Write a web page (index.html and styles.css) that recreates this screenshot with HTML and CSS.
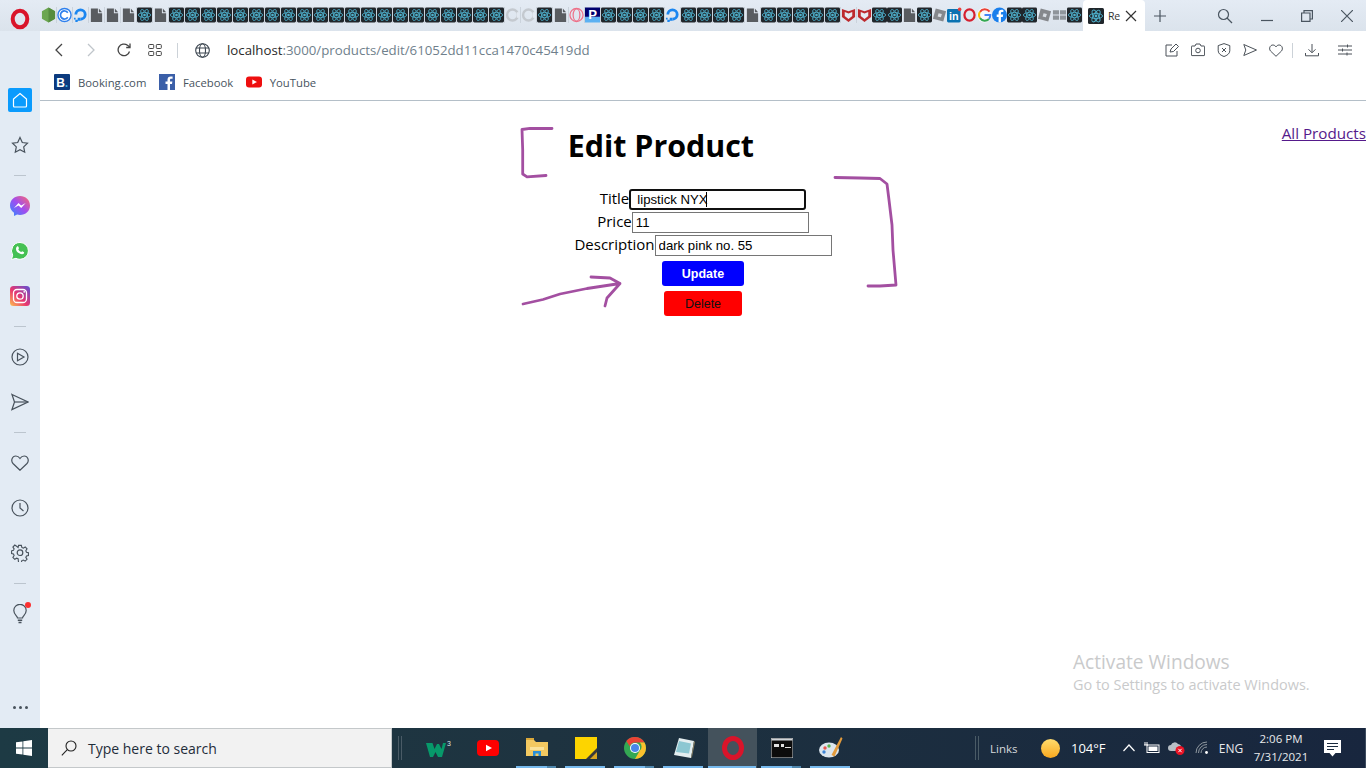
FILE: index.html
```html
<!DOCTYPE html>
<html lang="en">
<head>
    <meta charset="UTF-8">
    <title>React App</title>
    <link rel="stylesheet" href="styles.css">
</head>
<body>
    <!-- favicon sprites -->
    <svg class="sprites" xmlns="http://www.w3.org/2000/svg">
        <symbol id="react" viewBox="0 0 16 16">
            <rect width="16" height="16" rx="1.5" fill="#20262b"/>
            <g fill="none" stroke="#4fb3cf" stroke-width=".9">
                <ellipse cx="8" cy="8" rx="6.6" ry="2.6"/>
                <ellipse cx="8" cy="8" rx="6.6" ry="2.6" transform="rotate(60 8 8)"/>
                <ellipse cx="8" cy="8" rx="6.6" ry="2.6" transform="rotate(120 8 8)"/>
            </g>
            <circle cx="8" cy="8" r="1.4" fill="#4fb3cf"/>
        </symbol>
        <symbol id="doc" viewBox="0 0 16 16">
            <path d="M2 1h7.5v5H14v9.500H2z" fill="#595c60"/>
            <path d="M10.500 1L14 5h-3.500z" fill="#595c60"/>
        </symbol>
        <symbol id="node" viewBox="0 0 16 16">
            <path d="M8 0l7 4v8l-7 4-7-4V4z" fill="#6ba650"/>
            <path d="M8 0l7 4v8l-7 4z" fill="#558c3e"/>
        </symbol>
        <symbol id="cee" viewBox="0 0 16 16">
            <circle cx="8" cy="8" r="7" fill="#fff" stroke="#2f80ed" stroke-width="1.500"/>
            <path d="M11.500 5.500a4.300 4.300 0 1 0 0 5" fill="none" stroke="#2f80ed" stroke-width="1.800"/>
        </symbol>
        <symbol id="ocean" viewBox="0 0 16 16">
            <path d="M8 14a6.500 6.500 0 1 0-6.500-6.500h3A3.500 3.500 0 1 1 8 11z" fill="#1b86f0"/>
            <path d="M5 11h3v3H5zM2.500 13H5v2.500H2.500zM1 11h1.800v1.800H1z" fill="#1b86f0"/>
        </symbol>
        <symbol id="ghost" viewBox="0 0 16 16">
            <circle cx="8" cy="8" r="5.800" fill="none" stroke="#c4c9cf" stroke-width="2.600"/>
            <path d="M14 5v6" stroke="#e3e9f1" stroke-width="3"/>
        </symbol>
        <symbol id="ring" viewBox="0 0 16 16">
            <circle cx="8" cy="8" r="7" fill="none" stroke="#ee7088" stroke-width="1.300"/>
            <ellipse cx="8" cy="8" rx="3.600" ry="6.500" fill="none" stroke="#ee7088" stroke-width="1.300"/>
        </symbol>
        <symbol id="pee" viewBox="0 0 16 16">
            <rect width="16" height="10" fill="#00006e"/>
            <rect y="10" width="16" height="6" fill="#5cb1f2"/>
            <text x="8" y="12.500" class="sprite-text" font-size="14" fill="#fff">P</text>
        </symbol>
        <symbol id="shield" viewBox="0 0 16 16">
            <path d="M1 1.500l7 2.500 7-2.500V10l-7 5.500L1 10z" fill="#bd2a2e"/>
            <path d="M4 4.800l4 1.500 4-1.500V9L8 12.200 4 9z" fill="#e6ebf2"/>
        </symbol>
        <symbol id="roblox" viewBox="0 0 16 16">
            <path d="M4 1l11 3-3 11L1 12z" fill="#85888c"/>
            <path d="M7 6l3.500 1-1 3.500L6 9.500z" fill="#d8dde3"/>
        </symbol>
        <symbol id="linked" viewBox="0 0 16 16">
            <rect width="14.500" y="1.500" height="14.500" rx="1.500" fill="#0a72b1"/>
            <text x="7.200" y="13" class="sprite-text" font-size="11.500" fill="#fff">in</text>
            <circle cx="13.500" cy="2" r="1.900" fill="#e8413c"/>
        </symbol>
        <symbol id="opera" viewBox="0 0 16 16">
            <ellipse cx="8" cy="8" rx="5.400" ry="6" fill="none" stroke="#d5202f" stroke-width="2.400"/>
        </symbol>
        <symbol id="google" viewBox="0 0 16 16">
            <circle cx="8" cy="8" r="8" fill="#f6f8fb"/>
            <path d="M13.400 4.500A6.300 6.300 0 0 0 3.200 4.600" fill="none" stroke="#ea4335" stroke-width="2.200"/>
            <path d="M3.200 4.600a6.300 6.300 0 0 0 0 6.800" fill="none" stroke="#fbbc05" stroke-width="2.200"/>
            <path d="M3.200 11.400a6.300 6.300 0 0 0 9.600.800" fill="none" stroke="#34a853" stroke-width="2.200"/>
            <path d="M8 8h6.200a6.300 6.300 0 0 1-1.400 4.200" fill="none" stroke="#4285f4" stroke-width="2.200"/>
        </symbol>
        <symbol id="fbook" viewBox="0 0 16 16">
            <circle cx="8" cy="8" r="8" fill="#1a7fec"/>
            <path d="M9.500 16v-6h2l.4-2.500H9.500V6c0-.8.3-1.300 1.400-1.300h1.200V2.600c-.4-.1-1.100-.1-1.900-.1-2 0-3.200 1.200-3.200 3.300v1.700h-2V10h2v6z" fill="#fff"/>
        </symbol>
        <symbol id="apps" viewBox="0 0 16 16">
            <path d="M1 3h6.500v4.500H1zM8.500 3H15v4.500H8.500zM1 8.500h6.500V13H1zM8.500 8.500H15V13H8.500z" fill="#8f959b"/>
        </symbol>
    </svg>

    <div class="window">
        <div class="tabstrip">
            <div class="logo-slot">
                <svg width="20" height="22" viewBox="0 0 20 22"><ellipse cx="10" cy="11" rx="7.300" ry="8.300" fill="none" stroke="#d9142a" stroke-width="4"/></svg>
            </div>
            <div class="favicons" id="favicons"></div>
            <div class="active-tab">
                <svg class="fav" width="16" height="16"><use href="#react"/></svg>
                <span class="tab-title">Re</span>
                <svg class="tab-close" width="12" height="12" viewBox="0 0 12 12"><path d="M1 1l10 10M11 1L1 11" stroke="#333" stroke-width="1.200"/></svg>
            </div>
            <svg class="new-tab" width="12" height="12" viewBox="0 0 12 12"><path d="M6 0v12M0 6h12" stroke="#4a5560" stroke-width="1.200"/></svg>
            <div class="window-controls">
                <svg width="16" height="16" viewBox="0 0 16 16" fill="none" stroke="#4a5560" stroke-width="1.200"><circle cx="6.500" cy="6.500" r="5"/><path d="M10 10l5 5"/></svg>
                <svg width="12" height="12" viewBox="0 0 12 12" fill="none" stroke="#4a5560" stroke-width="1.200"><path d="M0 10.500h12"/></svg>
                <svg width="12" height="12" viewBox="0 0 12 12" fill="none" stroke="#4a5560" stroke-width="1.200"><path d="M.6 3h8.400v8.400H.6zM3 3V.6h8.400V9H9"/></svg>
                <svg width="12" height="12" viewBox="0 0 12 12" fill="none" stroke="#4a5560" stroke-width="1.200"><path d="M0 0l12 12M12 0L0 12"/></svg>
            </div>
        </div>

        <div class="browser-body">
            <aside class="sidebar">
                <div class="side-item">
                    <div class="home-tile">
                        <svg width="16" height="16" viewBox="0 0 16 16" fill="none" stroke="#fff" stroke-width="1.200"><path d="M8 1.500l6.500 5.500v7a1 1 0 0 1-1 1h-11a1 1 0 0 1-1-1V7z"/></svg>
                    </div>
                </div>
                <div class="side-item">
                    <svg width="18" height="18" viewBox="0 0 18 18" class="line-icon"><path d="M9 1.500l2.300 5 5.200.7-3.800 3.700 1 5.300L9 13.700 4.300 16.200l1-5.300L1.500 7.200l5.200-.7z"/></svg>
                </div>
                <div class="side-rule"></div>
                <div class="side-item">
                    <svg width="20" height="20" viewBox="0 0 20 20">
                        <defs><linearGradient id="msg" x1="0" y1="1" x2="1" y2="0"><stop offset="0" stop-color="#2f8cff"/><stop offset=".5" stop-color="#a04df0"/><stop offset="1" stop-color="#ff6a6a"/></linearGradient></defs>
                        <path d="M10 0c5.600 0 10 4.100 10 9.500S15.600 19 10 19c-1 0-2-.1-2.900-.4L4 20v-3.300C1.500 15 0 12.500 0 9.500 0 4.100 4.400 0 10 0z" fill="url(#msg)"/>
                        <path d="M4 12l4.500-5 2.700 2.500L15.700 7l-4.500 5-2.700-2.500z" fill="#fff"/>
                    </svg>
                </div>
                <div class="side-item">
                    <svg width="18" height="18" viewBox="0 0 18 18">
                        <path d="M9 .5a8.400 8.400 0 0 1 0 16.800c-1.500 0-2.900-.4-4-1L.5 17.500l1.200-4.300A8.400 8.400 0 0 1 9 .5z" fill="#45c153" stroke="#fff"/>
                        <path d="M6 4.500c.7-.5 1.200-.3 1.500.5l.5 1.300-.7 1c.6 1.300 1.500 2.200 2.900 2.800l1-.8 1.500.7c.6.400.6.900.2 1.500-1 1.200-2.800 1-4.700-.2C6.200 10.700 4.900 8.800 5 6.800c0-1 .4-1.800 1-2.300z" fill="#fff"/>
                    </svg>
                </div>
                <div class="side-item">
                    <svg width="20" height="20" viewBox="0 0 20 20">
                        <defs><linearGradient id="ig" x1="0" y1="1" x2="1" y2="0"><stop offset="0" stop-color="#fdc04f"/><stop offset=".45" stop-color="#e8366f"/><stop offset="1" stop-color="#5b51d8"/></linearGradient></defs>
                        <rect width="20" height="20" rx="3.500" fill="url(#ig)"/>
                        <rect x="3.500" y="3.500" width="13" height="13" rx="3.500" fill="none" stroke="#fff" stroke-width="1.300"/>
                        <circle cx="10" cy="10" r="3.200" fill="none" stroke="#fff" stroke-width="1.300"/>
                        <circle cx="14.200" cy="5.800" r=".9" fill="#fff"/>
                    </svg>
                </div>
                <div class="side-rule"></div>
                <div class="side-item">
                    <svg width="18" height="18" viewBox="0 0 18 18" class="line-icon"><circle cx="9" cy="9" r="8"/><path d="M6.500 5.200L13 9l-6.500 3.800z"/></svg>
                </div>
                <div class="side-item">
                    <svg width="18" height="18" viewBox="0 0 18 18" class="line-icon"><path d="M1 1.500L17 9 1 16.500 3.500 9z"/><path d="M3.500 9H17"/></svg>
                </div>
                <div class="side-rule"></div>
                <div class="side-item">
                    <svg width="18" height="16" viewBox="0 0 18 16" class="line-icon"><path d="M9 15.200L2 8.500C-.5 5.500 1.200 1 4.800 1 6.700 1 8 2 9 3.500 10 2 11.300 1 13.200 1c3.600 0 5.300 4.500 2.800 7.500z"/></svg>
                </div>
                <div class="side-item">
                    <svg width="18" height="18" viewBox="0 0 18 18" class="line-icon"><circle cx="9" cy="9" r="8"/><path d="M9 4v5l3.500 3"/></svg>
                </div>
                <div class="side-item">
                    <svg width="18" height="18" viewBox="0 0 18 18" class="line-icon"><path d="M7.500 1h3l.5 2.300 1.600.7 2-1.300 2 2.100-1.300 2 .7 1.600 2.100.5v3l-2.100.5-.7 1.600 1.300 2-2 2-2-1.200-1.600.6-.5 2.300h-3L7 15.400l-1.600-.6-2 1.200-2-2 1.300-2L2 10.400l-2-.5v-3l2-.5.7-1.600-1.300-2 2-2.100 2 1.300L7 3.300z" transform="translate(.6 .4) scale(.93)"/><circle cx="9" cy="8.700" r="2.800"/></svg>
                </div>
                <div class="side-rule"></div>
                <div class="side-item bulb">
                    <svg width="14" height="20" viewBox="0 0 14 20" class="line-icon"><path d="M4.500 14c0-2-3.700-3.500-3.700-7.500a6.200 6.200 0 0 1 12.400 0c0 4-3.700 5.500-3.700 7.500z"/><path d="M4.800 16.300h4.400M5.500 18.500h3" stroke-width="1.600"/></svg>
                    <span class="red-dot"></span>
                </div>
                <div class="side-dots"><span></span><span></span><span></span></div>
            </aside>

            <main class="content">
                <div class="toolbar">
                    <div class="nav-icons">
                        <svg class="nav-btn" width="10" height="14" viewBox="0 0 10 14" fill="none" stroke="#444" stroke-width="1.300"><path d="M8 1L2 7l6 6"/></svg>
                        <svg class="nav-btn" width="10" height="14" viewBox="0 0 10 14" fill="none" stroke="#bfc5ca" stroke-width="1.300"><path d="M2 1l6 6-6 6"/></svg>
                        <svg class="nav-btn" width="14" height="14" viewBox="0 0 14 14" fill="none" stroke="#444" stroke-width="1.300"><path d="M12.500 8.500A5.800 5.800 0 1 1 10.500 2.300L13 4.200"/><path d="M13 .5v4H9.200"/></svg>
                        <svg class="nav-btn" width="14" height="12" viewBox="0 0 14 12" fill="none" stroke="#444"><rect x=".7" y=".5" width="5" height="4" rx=".8"/><rect x="8.300" y=".5" width="5" height="4" rx=".8"/><rect x=".7" y="7.500" width="5" height="4" rx=".8"/><rect x="8.300" y="7.500" width="5" height="4" rx=".8"/></svg>
                    </div>
                    <span class="tool-rule"></span>
                    <svg class="globe" width="15" height="15" viewBox="0 0 15 15" fill="none" stroke="#3c4650" stroke-width="1.100"><circle cx="7.500" cy="7.500" r="6.800"/><ellipse cx="7.500" cy="7.500" rx="3" ry="6.800"/><path d="M1 5h13M1 10h13"/></svg>
                    <div class="address"><span class="host">localhost</span>:3000/products/edit/61052dd11cca1470c45419dd</div>
                    <div class="tool-right">
                        <svg width="14" height="14" viewBox="0 0 14 14" class="tool-icon"><path d="M7 2H1v11h11V8"/><path d="M5 9l1-3 5-5 2.500 2.500-5 5z"/></svg>
                        <svg width="14" height="14" viewBox="0 0 14 14" class="tool-icon"><path d="M1 3h3l1-2h4l1 2h3a.6.6 0 0 1 .6.600V12a.6.6 0 0 1-.6.600H1a.6.6 0 0 1-.6-.600V3.600A.6.6 0 0 1 1 3z"/><circle cx="7" cy="7.500" r="2.300"/></svg>
                        <svg width="14" height="14" viewBox="0 0 14 14" class="tool-icon"><path d="M7 .6l5.800 2v5.200c0 3-3 4.800-5.800 5.700-2.800-.9-5.800-2.700-5.800-5.700V2.600z"/><path d="M5 5l4 4M9 5L5 9"/></svg>
                        <svg width="14" height="14" viewBox="0 0 14 14" class="tool-icon"><path d="M.8 1.500L13.500 7 .8 12.500 2.800 7z"/></svg>
                        <svg width="14" height="13" viewBox="0 0 14 13" class="tool-icon"><path d="M7 12.300L1.500 7C-.4 4.700 1 1 3.900 1 5.300 1 6.300 1.800 7 2.900 7.700 1.800 8.700 1 10.100 1 13 1 14.400 4.700 12.500 7z"/></svg>
                        <span class="tool-rule slim"></span>
                        <svg width="14" height="14" viewBox="0 0 14 14" class="tool-icon"><path d="M7 1v8.500M3.500 6.300L7 9.800l3.500-3.500M.5 10v2.800h13V10"/></svg>
                        <svg width="14" height="12" viewBox="0 0 14 12" class="tool-icon"><path d="M0 2h14M0 6h14M0 10h14M9.500.5v3M4.500 4.500v3M9 8.500v3"/></svg>
                    </div>
                </div>
                <div class="bookmarks">
                    <a class="bookmark">
                        <svg width="16" height="16" viewBox="0 0 16 16"><rect width="16" height="16" rx="1" fill="#0b3a7e"/><text x="6.500" y="12.500" class="sprite-text" font-size="12" fill="#fff">B</text><circle cx="12.500" cy="12" r="1.100" fill="#3fb5e8"/></svg>
                        <span>Booking.com</span>
                    </a>
                    <a class="bookmark">
                        <svg width="16" height="16" viewBox="0 0 16 16"><rect width="16" height="16" fill="#3b5fa8"/><path d="M11 16v-6h2l.4-2.500H11V6c0-.8.3-1.300 1.400-1.300h1.200V2.600c-.4-.1-1.100-.1-1.900-.1-2 0-3.200 1.200-3.200 3.300v1.700h-2V10h2v6z" fill="#fff"/></svg>
                        <span>Facebook</span>
                    </a>
                    <a class="bookmark">
                        <svg width="16" height="16" viewBox="0 0 16 16"><rect y="2.500" width="16" height="11" rx="3" fill="#ee0f0f"/><path d="M6.300 5.500L11 8l-4.700 2.500z" fill="#fff"/></svg>
                        <span>YouTube</span>
                    </a>
                </div>

                <div class="page">
                    <div class="page-header">
                        <h1>Edit Product</h1>
                        <a class="all-products" href="#">All Products</a>
                    </div>
                    <form class="product-form">
                        <div class="field">
                            <label>Title</label>
                            <div class="input-wrap">
                                <input class="text-input is-focused" type="text" value="lipstick NYX">
                                <span class="caret"></span>
                            </div>
                        </div>
                        <div class="field">
                            <label>Price</label>
                            <input class="text-input" type="text" value="11">
                        </div>
                        <div class="field">
                            <label>Description</label>
                            <input class="text-input" type="text" value="dark pink no. 55">
                        </div>
                        <button class="btn btn-update" type="button">Update</button>
                        <button class="btn btn-delete" type="button">Delete</button>
                    </form>

                    <!-- hand drawn marks on top of the screenshot -->
                    <svg class="scribbles" width="1326" height="300" viewBox="40 101 1326 300">
                        <path d="M552 128.500L530 128.300 522 129.500 522.700 150 522.700 174 527 176.800 546 175.500"/>
                        <path d="M835 177.500L860 178 880 178.500 887 184 889 200 892 225 893 250 896 285 880 286 868 286"/>
                        <path d="M523 304L543 299.500 560 294 587 288.500 620 283.500M591 277L610 278 620 283.500 607 298 605 306"/>
                    </svg>

                    <div class="activate">
                        <div class="activate-title">Activate Windows</div>
                        <div class="activate-sub">Go to Settings to activate Windows.</div>
                    </div>
                </div>
            </main>
        </div>
    </div>

    <footer class="taskbar">
        <div class="start">
            <svg width="16" height="16" viewBox="0 0 16 16" fill="#fff"><path d="M0 2.300l6.500-.9v6.200H0zM7.300 1.300L16 0v7.600H7.300zM0 8.400h6.500v6.200L0 13.700zM7.300 8.400H16V16l-8.700-1.300z"/></svg>
        </div>
        <div class="search-box">
            <svg width="16" height="16" viewBox="0 0 16 16" fill="none" stroke="#222" stroke-width="1.100"><circle cx="10" cy="6" r="5"/><path d="M6.300 9.700L.8 15.300"/></svg>
            <span>Type here to search</span>
        </div>
        <span class="gripper"></span>
        <div class="app w3">
            <svg width="26" height="20" viewBox="0 0 26 20">
                <path d="M0 5h6.500l2 6 2.500-5h2l2.500 5 1.500-6H20l-4 14h-4l-2.500-5L7 19H4z" fill="#07996a"/>
                <text x="21" y="8" class="w3-sup">3</text>
            </svg>
        </div>
        <div class="app">
            <svg width="22" height="16" viewBox="0 0 22 16"><rect width="22" height="16" rx="4" fill="#f00"/><path d="M9 4.800l6 3.200-6 3.200z" fill="#fff"/></svg>
        </div>
        <div class="app running stacked">
            <svg width="22" height="20" viewBox="0 0 22 20"><path d="M0 2h8l2 2h12v14H0z" fill="#f3c961"/><path d="M0 0h8v2H0z" fill="#d9a83a"/><path d="M4 9h14v3H4z" fill="#fbe39a"/><path d="M7 18v-5h8v5h-2.500v-2.500h-3V18z" fill="#2a8fd8"/></svg>
        </div>
        <div class="app running">
            <svg width="22" height="22" viewBox="0 0 22 22"><rect width="22" height="22" fill="#fdd400"/><path d="M11 22l11-11v11z" fill="#3a3a3a"/><path d="M15 22l7-7v7z" fill="#d9a520"/></svg>
        </div>
        <div class="app running stacked">
            <svg width="22" height="22" viewBox="0 0 22 22"><circle cx="11" cy="11" r="11" fill="#34a853"/><path d="M11 0a11 11 0 0 1 9.500 5.500H11a5.500 5.500 0 0 0-5.200 3.700L2.300 4A11 11 0 0 1 11 0z" fill="#ea4335"/><path d="M20.500 5.500A11 11 0 0 1 11 22l4.700-8.200a5.500 5.500 0 0 0 0-8.300z" fill="#fbc02d"/><circle cx="11" cy="11" r="5" fill="#fff"/><circle cx="11" cy="11" r="4" fill="#4a86e8"/></svg>
        </div>
        <div class="app running">
            <svg width="22" height="22" viewBox="0 0 22 22"><path d="M6 1l15 3-3 17L1 18z" fill="#e4eef0"/><path d="M6 4l12 2.500-2 10L3 15z" fill="#8cc7d2"/><path d="M18 21l3-17 1 1-3 15z" fill="#8a8265"/></svg>
        </div>
        <div class="app running active">
            <svg width="24" height="24" viewBox="0 0 24 24"><ellipse cx="12" cy="12" rx="8.500" ry="9.500" fill="none" stroke="#d9142a" stroke-width="5"/></svg>
        </div>
        <div class="app running stacked">
            <svg width="22" height="20" viewBox="0 0 22 20"><rect width="22" height="20" fill="#0c0c0c" stroke="#cfd4d8"/><rect x=".5" y=".5" width="21" height="2" fill="#cfd4d8"/><path d="M3 6h5v3H3zM10 6h3v3h-3zM14 9h6v1h-6z" fill="#e0e0e0"/></svg>
        </div>
        <div class="app running">
            <svg width="24" height="24" viewBox="0 0 24 24"><ellipse cx="10" cy="14" rx="10" ry="7.500" fill="#dce6ee"/><circle cx="6" cy="12" r="1.700" fill="#e8574e"/><circle cx="10" cy="10" r="1.700" fill="#5ab552"/><circle cx="5" cy="16" r="1.700" fill="#3f86d6"/><path d="M22 1l1.500 1.500-8 18-3-1.500z" fill="#e39b3c"/></svg>
        </div>
        <div class="tray">
            <span class="gripper"></span>
            <span class="tray-links">Links</span>
            <div class="weather">
                <span class="sun"></span>
                <span>104°F</span>
            </div>
            <div class="tray-icon wide-22">
                <svg width="12" height="8" viewBox="0 0 12 8" fill="none" stroke="#fff" stroke-width="1.200"><path d="M.5 7L6 1l5.500 6"/></svg>
            </div>
            <div class="tray-icon wide-24">
                <svg width="16" height="12" viewBox="0 0 16 12" fill="none" stroke="#fff"><rect x="3" y="3" width="12" height="7.500"/><rect x="4.500" y="4.500" width="9" height="4.500" fill="#fff" stroke="none"/><path d="M1 0v3M3 0v3M0 3h4"/></svg>
            </div>
            <div class="tray-icon wide-25">
                <svg width="18" height="16" viewBox="0 0 18 16"><path d="M3 11a3 3 0 0 1 0-6 4 4 0 0 1 7-1 3.500 3.500 0 0 1 3 4v3z" fill="#b8bfc6"/><circle cx="12" cy="10.500" r="4.500" fill="#e81123"/><path d="M10.300 8.800l3.400 3.400M13.700 8.800l-3.400 3.400" stroke="#fff"/></svg>
            </div>
            <div class="tray-icon wide-25">
                <svg width="14" height="14" viewBox="0 0 14 14" fill="none" stroke="#8f989f"><path d="M1 12a11 11 0 0 1 11-11M3.500 12A8.500 8.500 0 0 1 12 3.500M6 12a6 6 0 0 1 6-6" /><circle cx="11.500" cy="11.500" r="1.400" fill="#fff" stroke="none"/></svg>
            </div>
            <span class="lang">ENG</span>
            <div class="clock">
                <div>2:06 PM</div>
                <div>7/31/2021</div>
            </div>
            <div class="notify">
                <svg width="17" height="17" viewBox="0 0 17 17"><path d="M0 0h17v13h-5.500L8.500 16.500 5.500 13H0z" fill="#fff"/><path d="M3 3.500h11M3 6.500h11M3 9.500h7" stroke="#1a2a3e"/></svg>
            </div>
            <span class="show-desktop"></span>
        </div>
    </footer>

    <script src="script.js"></script>
</body>
</html>
```

FILE: styles.css
```css
* {
    box-sizing: border-box;
}
body {
    margin: 0;
    width: 1366px;
    height: 768px;
    overflow: hidden;
    display: flex;
    flex-direction: column;
    font-family: 'Open Sans', 'Noto Sans', sans-serif;
    background-color: #e3ebf4;
}
.sprites {
    display: none;
}
.sprite-text {
    font-family: 'Liberation Sans', sans-serif;
    font-weight: bold;
    text-anchor: middle;
}
.window {
    height: 728px;
    display: flex;
    flex-direction: column;
}

/* tab strip */
.tabstrip {
    height: 31px;
    flex: none;
    display: flex;
    align-items: center;
    background: linear-gradient(#e4ebf4, #dbe3ec);
}
.logo-slot {
    width: 41px;
    flex: none;
    display: flex;
    justify-content: center;
    padding-right: 1px;
    padding-top: 7px;
}
.favicons {
    width: 1042px;
    flex: none;
    display: flex;
    height: 16px;
    margin-top: -1px;
}
.tab-slot {
    width: 16px;
    flex: none;
    border-right: 1px solid #cbd3dc;
}
.tab-slot.narrow {
    width: 15px;
    border-right: none;
}
.tab-slot svg {
    display: block;
    width: 15px;
    height: 16px;
}
.active-tab {
    width: 62px;
    height: 31px;
    flex: none;
    background-color: #fff;
    border-radius: 4px 4px 0 0;
    display: flex;
    align-items: center;
    padding-left: 5px;
}
.tab-title {
    width: 11px;
    margin-left: 4px;
    font-size: 10.500px;
    letter-spacing: -.3px;
    color: #333;
}
.tab-close {
    margin-left: 6px;
}
.new-tab {
    margin-left: 9px;
    flex: none;
}
.window-controls {
    margin-left: 51px;
    display: flex;
    align-items: center;
    gap: 28px;
}

/* left sidebar */
.browser-body {
    flex: 1;
    display: flex;
    min-height: 0;
}
.sidebar {
    width: 40px;
    flex: none;
    display: flex;
    flex-direction: column;
    padding-top: 46px;
    background-color: #e3ebf4;
}
.side-item {
    height: 45px;
    display: flex;
    align-items: center;
    justify-content: center;
    position: relative;
}
.side-rule {
    height: 16px;
    display: flex;
    align-items: center;
    justify-content: center;
}
.side-rule::before {
    content: "";
    width: 12px;
    height: 1px;
    background-color: #bcc5ce;
}
.home-tile {
    width: 24px;
    height: 24px;
    border-radius: 2px;
    background-color: #0a9bfd;
    display: flex;
    align-items: center;
    justify-content: center;
}
.line-icon {
    fill: none;
    stroke: #48525c;
    stroke-width: 1.2;
}
.red-dot {
    position: absolute;
    top: 11px;
    left: 25px;
    width: 6px;
    height: 6px;
    border-radius: 50%;
    background-color: #fb3030;
}
.side-dots {
    margin-top: auto;
    margin-bottom: 19px;
    display: flex;
    justify-content: center;
    gap: 3px;
}
.side-dots span {
    width: 3px;
    height: 3px;
    border-radius: 50%;
    background-color: #48525c;
}

/* toolbar and bookmarks */
.content {
    flex: 1;
    display: flex;
    flex-direction: column;
    background-color: #fff;
    min-width: 0;
}
.toolbar {
    height: 38px;
    flex: none;
    display: flex;
    align-items: center;
    padding-left: 14px;
}
.nav-icons {
    display: flex;
    align-items: center;
    gap: 22px;
}
.nav-icons .nav-btn:nth-child(3) {
    margin-left: -1px;
}
.nav-icons .nav-btn:nth-child(4) {
    margin-left: -5px;
}
.tool-rule {
    width: 1px;
    height: 15px;
    margin-left: 15px;
    background-color: #ccd2d8;
}
.globe {
    margin-left: 17px;
}
.address {
    margin-left: 17px;
    font-size: 13.250px;
    color: #6f7f8c;
    white-space: nowrap;
}
.host {
    color: #2a2a2a;
}
.tool-right {
    margin-left: auto;
    margin-right: 14px;
    display: flex;
    align-items: center;
    gap: 12px;
}
.tool-icon {
    fill: none;
    stroke: #4a5158;
    stroke-width: 1;
}
.tool-rule.slim {
    margin: 0 0 0 -3px;
}
.tool-right svg:last-child {
    margin-left: 7px;
}
.bookmarks {
    height: 32px;
    flex: none;
    display: flex;
    align-items: center;
    padding: 0 0 5px 14px;
    gap: 12.500px;
    border-bottom: 1px solid #b4bfc8;
}
.bookmark {
    display: flex;
    align-items: center;
    gap: 8px;
    font-size: 11.300px;
    color: #47535e;
}

/* the actual page */
.page {
    flex: 1;
    position: relative;
    padding-top: 21px;
    color: #000;
}
.page-header {
    display: flex;
    align-items: flex-start;
}
.page-header h1 {
    flex: 1;
    margin: 0;
    text-align: center;
    font-size: 30.400px;
    line-height: 48px;
    font-weight: 700;
}
.all-products {
    font-size: 15.200px;
    line-height: 22px;
    color: #551a8b;
}
.product-form {
    display: flex;
    flex-direction: column;
    align-items: center;
    margin-top: 18px;
}
.field {
    height: 23px;
    display: flex;
    align-items: center;
    justify-content: center;
    font-size: 15px;
}
.field label {
    margin-bottom: 4px;
}
.input-wrap {
    position: relative;
    display: flex;
}
.text-input {
    width: 177px;
    height: 21px;
    padding: 1px 3px;
    border: 1px solid #767676;
    border-radius: 0;
    font-family: 'Liberation Sans', Arial, sans-serif;
    font-size: 13.200px;
    color: #000;
    background-color: #fff;
}
.text-input.is-focused {
    padding-left: 6px;
    border: 2px solid #101010;
    border-radius: 3px;
}
.caret {
    position: absolute;
    top: 3px;
    left: 77px;
    width: 1px;
    height: 15px;
    background-color: #000;
}
.btn {
    display: block;
    height: 25px;
    border: none;
    border-radius: 3px;
    font-family: 'Liberation Sans', Arial, sans-serif;
    font-size: 12.500px;
}
.btn-update {
    width: 82px;
    margin-top: 4px;
    background-color: #0000ff;
    color: #fff;
    font-weight: bold;
}
.btn-delete {
    width: 78px;
    margin-top: 5px;
    background-color: #ff0000;
    color: #111;
}
.scribbles {
    position: absolute;
    left: 0;
    top: 0;
    fill: none;
    stroke: #a34fa1;
    stroke-width: 2.800;
    stroke-linecap: round;
    stroke-linejoin: round;
    pointer-events: none;
}
.activate {
    position: absolute;
    left: 1033px;
    top: 549px;
    color: #c9cacb;
}
.activate-title {
    font-size: 19.100px;
    line-height: 25px;
}
.activate-sub {
    font-size: 14.440px;
    line-height: 20px;
}

/* windows taskbar */
.taskbar {
    height: 40px;
    flex: none;
    display: flex;
    align-items: stretch;
    color: #fff;
    background: linear-gradient(90deg, #1d3a44, #1e3340 40%, #18263e);
}
.start {
    width: 48px;
    flex: none;
    display: flex;
    align-items: center;
    justify-content: center;
}
.search-box {
    width: 344px;
    flex: none;
    display: flex;
    align-items: center;
    gap: 11px;
    padding-left: 13px;
    background-color: #f2f2f2;
    border: 1px solid #c4c8ca;
    border-left: none;
    font-size: 14px;
    color: #1f2d3a;
}
.gripper {
    width: 4px;
    height: 24px;
    align-self: center;
    margin-left: 6px;
    border-left: 1px solid #4a5b66;
    border-right: 1px solid #4a5b66;
    flex: none;
}
.app {
    width: 49px;
    flex: none;
    display: flex;
    align-items: center;
    justify-content: center;
    position: relative;
}
.w3 {
    width: 61px;
    padding-left: 12px;
}
.w3-sup {
    font-family: 'Liberation Sans', sans-serif;
    font-size: 7px;
    fill: #dfe6e6;
}
.app.running::after {
    content: "";
    position: absolute;
    left: 4px;
    right: 5px;
    bottom: 0;
    height: 2px;
    background-color: #76b9ed;
}
.app.stacked::before {
    content: "";
    position: absolute;
    right: 5px;
    bottom: 0;
    width: 9px;
    height: 2px;
    background-color: #4f87ad;
    z-index: 1;
}
.app.active {
    background-color: #44525c;
}
.app.active::after {
    left: 0;
    right: 1px;
}
.tray {
    margin-left: auto;
    display: flex;
    align-items: center;
    font-size: 12px;
}
.tray > .gripper {
    margin-left: 0;
}
.tray-links {
    width: 47px;
    padding-left: 11px;
    font-size: 11.500px;
    color: #d5d9dc;
}
.weather {
    width: 92px;
    display: flex;
    align-items: center;
    gap: 11px;
    padding-left: 15px;
    font-size: 13px;
}
.sun {
    width: 19px;
    height: 19px;
    flex: none;
    border-radius: 50%;
    background: linear-gradient(#ffdc6e, #f8a81f);
}
.tray-icon {
    display: flex;
    justify-content: center;
    align-items: center;
}
.wide-22 {
    width: 22px;
}
.wide-24 {
    width: 24px;
}
.wide-25 {
    width: 25px;
}
.lang {
    width: 34px;
    text-align: center;
    color: #e8eaec;
}
.clock {
    width: 66px;
    text-align: center;
    font-size: 11.500px;
    line-height: 18px;
    color: #e8eaec;
}
.notify {
    width: 32px;
    display: flex;
    justify-content: center;
    padding-left: 4px;
}
.show-desktop {
    width: 20px;
    height: 40px;
    border-right: 1px solid #3d4c5f;
}
```

FILE: script.js
```js
// one entry per pinned tab, left to right
function repeat(name, n) {
    return Array(n).fill(name);
}

const tabs = [
    'node', 'cee', 'ocean',
    ...repeat('doc', 3), 'react', 'doc',
    ...repeat('react', 21),
    'ghost', 'ghost', 'react', 'doc', 'ring', 'pee',
    ...repeat('react', 4), 'ocean',
    ...repeat('react', 4), 'doc',
    ...repeat('react', 5),
    'shield', 'shield', 'react', 'react', 'doc', 'react',
    'roblox', 'linked', 'opera', 'google', 'fbook',
    'react', 'react', 'roblox', 'apps', 'react'
];

const strip = document.getElementById('favicons');

tabs.forEach(function (name, i) {
    const slot = document.createElement('div');
    // the tabs get a bit tighter towards the end of the strip
    slot.className = i >= 51 ? 'tab-slot narrow' : 'tab-slot';
    slot.innerHTML = '<svg preserveAspectRatio="none"><use href="#' + name + '"/></svg>';
    strip.appendChild(slot);
});
```
